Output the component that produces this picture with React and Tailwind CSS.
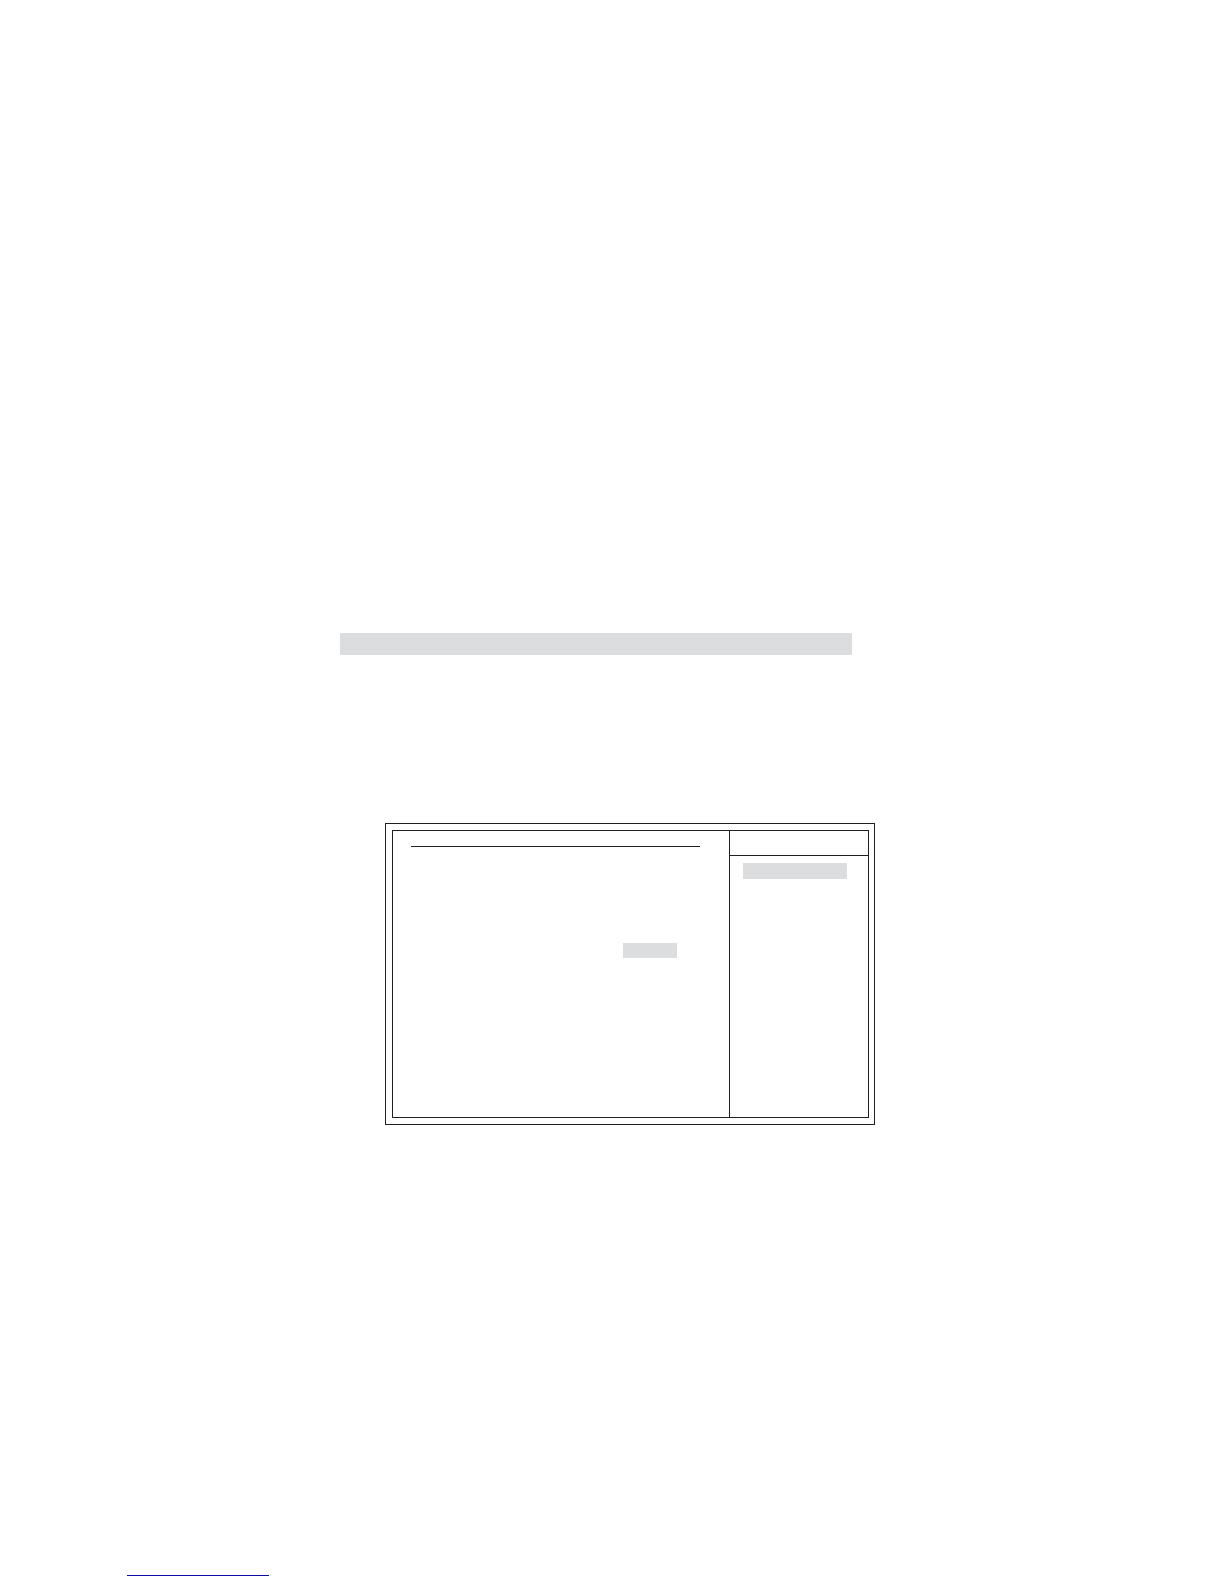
import React from 'react';

function SetupPanel() {
  return (
    <section className="ml-[45px] -mr-[23px] mt-[168px] border border-[#231f20] py-[6px] pl-[6px] pr-[5px]">
      <div className="flex h-[288px] border border-[#231f20]">

        {/* Options */}
        <div className="flex-1 pt-[15px]">
          <hr className="ml-[18px] mr-[29px] border-t border-[#231f20]" />
          <div className="ml-auto mr-[52px] mt-24 h-[15px] w-[54px] bg-[#dcddde]" />
        </div>

        {/* Item help */}
        <aside className="w-[139px] border-l border-[#231f20]">
          <div className="h-[25px] border-b border-[#231f20]" />
          <div className="ml-[13px] mr-[21px] mt-[7px] h-4 bg-[#dcddde]" />
        </aside>
      </div>
    </section>
  );
}

export default function App() {
  return (
    <div className="min-h-screen bg-white">
      <main className="ml-[340px] mr-[372px] pt-[633px]">
        <div className="h-[22px] bg-[#dcddde]" />
        <SetupPanel />
      </main>

      {/* Footer rule */}
      <footer className="pb-2 pl-[127px] pt-[450px]">
        <hr className="h-px w-[142px] border-0 bg-[#0c0ca8]" />
      </footer>
    </div>
  );
}
